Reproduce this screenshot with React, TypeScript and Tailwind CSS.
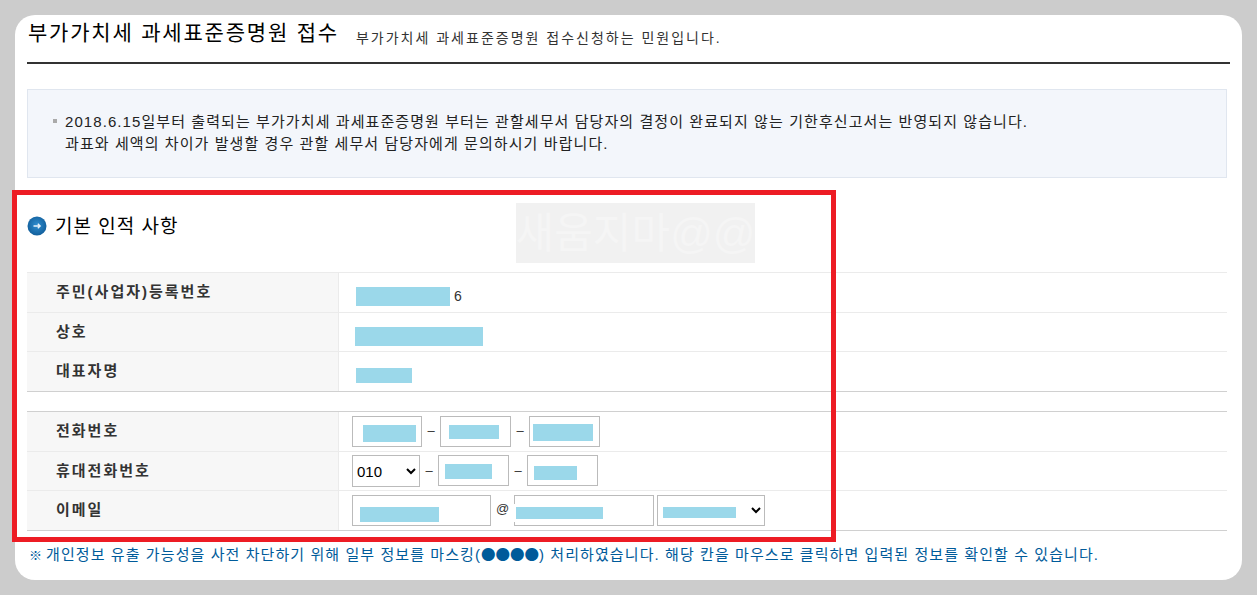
import { FC, ReactNode } from 'react';

const font = '[font-family:"Liberation_Sans","Noto_Sans_CJK_KR",sans-serif]';

const Row: FC<{ label: string; line: string; h: string; children?: ReactNode }> = ({ label, line, h, children }) => {
  return (
    <div className={`flex border-t ${line} ${h}`}>
      <div className="flex w-[312px] items-center border-r border-[#ebebeb] bg-[#f7f7f7] pl-[29px] text-[15px] font-bold tracking-[2px] text-[#333]">
        {label}
      </div>
      <div className="flex flex-1 items-start">{children}</div>
    </div>
  );
};

const Dash = () => <span className="mt-[11px] w-[18px] text-center text-[13px] leading-[16px] text-[#333]">–</span>;

export default function App() {
  return (
    <div className={`relative h-[595px] w-[1257px] overflow-hidden bg-[#cccccc] p-[15px] ${font}`}>
      <div className="h-[565px] w-[1227px] rounded-[20px] bg-white px-[12px]">
        {/* title */}
        <div className="flex h-[49px] items-start border-b-2 border-[#333] pt-[4px]">
          <h1 className="ml-[1px] text-[21px] leading-[28px] tracking-[1.8px] text-black">부가가치세 과세표준증명원 접수</h1>
          <span className="ml-[17px] mt-[9px] text-[14px] leading-[20px] tracking-[2px] text-[#333]">
            부가가치세 과세표준증명원 접수신청하는 민원입니다.
          </span>
        </div>

        {/* notice */}
        <div className="mt-[25px] flex h-[89px] w-[1200px] border border-[#e0e6ef] bg-[#f3f6fb] pl-[25px] pt-[21px] text-[15px] leading-[22px] tracking-[1.08px] text-[#222]">
          <span className="mr-[8px] mt-[8px] h-[4px] w-[4px] bg-[#aaaaaa]" />
          <p>
            2018.6.15일부터 출력되는 부가가치세 과세표준증명원 부터는 관할세무서 담당자의 결정이 완료되지 않는 기한후신고서는 반영되지 않습니다.
            <br />
            과표와 세액의 차이가 발생할 경우 관할 세무서 담당자에게 문의하시기 바랍니다.
          </p>
        </div>

        {/* section heading */}
        <div className="flex h-[94px] items-start pt-[37px]">
          <svg width="20" height="20" viewBox="0 0 20 20" className="mt-[1px]">
            <defs>
              <radialGradient id="ball" cx="50%" cy="45%" r="55%">
                <stop offset="0%" stopColor="#2f8ed0" />
                <stop offset="100%" stopColor="#125f9c" />
              </radialGradient>
            </defs>
            <circle cx="10" cy="10" r="9.5" fill="url(#ball)" />
            <path d="M6.5 10h6.5M10.8 7.8l2.4 2.2-2.4 2.2" fill="none" stroke="#e8f2fa" strokeWidth="1.3" />
          </svg>
          <h2 className="ml-[8px] mt-[1px] text-[19px] leading-[22px] tracking-[1px] text-black">기본 인적 사항</h2>
        </div>

        {/* company info */}
        <div className="w-[1200px] border-b border-[#d0d0d0]">
          <Row label="주민(사업자)등록번호" line="border-[#ebebeb]" h="h-[40px]">
            <div className="ml-[17px] mt-[14px] h-[19px] w-[94px] bg-[#9bd8ea]" />
            <span className="ml-[4px] mt-[14px] text-[14px] leading-[19px] text-[#333]">6</span>
          </Row>
          <Row label="상호" line="border-[#ebebeb]" h="h-[39px]">
            <div className="ml-[16px] mt-[14px] h-[19px] w-[128px] bg-[#9bd8ea]" />
          </Row>
          <Row label="대표자명" line="border-[#ebebeb]" h="h-[40px]">
            <div className="ml-[17px] mt-[16px] h-[15px] w-[56px] bg-[#9bd8ea]" />
          </Row>
        </div>

        {/* contact info */}
        <div className="mt-[19px] w-[1200px] border-b border-[#d0d0d0]">
          <Row label="전화번호" line="border-[#d0d0d0]" h="h-[40px]">
            <div className="ml-[13px] mt-[4px] h-[31px] w-[70px] border border-[#bbbbbb]">
              <div className="ml-[10px] mt-[8px] h-[17px] w-[53px] bg-[#9bd8ea]" />
            </div>
            <Dash />
            <div className="mt-[4px] h-[31px] w-[71px] border border-[#bbbbbb]">
              <div className="ml-[8px] mt-[8px] h-[14px] w-[50px] bg-[#9bd8ea]" />
            </div>
            <Dash />
            <div className="mt-[4px] h-[31px] w-[71px] border border-[#bbbbbb]">
              <div className="ml-[3px] mt-[7px] h-[17px] w-[60px] bg-[#9bd8ea]" />
            </div>
          </Row>
          <Row label="휴대전화번호" line="border-[#ebebeb]" h="h-[39px]">
            <select className="ml-[13px] mt-[3px] h-[32px] w-[68px] border border-[#bbbbbb] text-[15px] text-black [font-family:'Liberation_Sans',sans-serif]">
              <option>010</option>
            </select>
            <Dash />
            <div className="mt-[3px] h-[31px] w-[71px] border border-[#bbbbbb]">
              <div className="ml-[6px] mt-[8px] h-[15px] w-[47px] bg-[#9bd8ea]" />
            </div>
            <Dash />
            <div className="mt-[3px] h-[31px] w-[71px] border border-[#bbbbbb]">
              <div className="ml-[6px] mt-[10px] h-[14px] w-[43px] bg-[#9bd8ea]" />
            </div>
          </Row>
          <Row label="이메일" line="border-[#ebebeb]" h="h-[40px]">
            <div className="ml-[13px] mt-[4px] h-[31px] w-[139px] border border-[#bbbbbb]">
              <div className="ml-[7px] mt-[11px] h-[15px] w-[79px] bg-[#9bd8ea]" />
            </div>
            <span className="ml-[5px] mt-[10px] w-[18px] text-[13px] leading-[16px] text-[#333]">@</span>
            <div className="relative mt-[4px] h-[31px] w-[140px] border border-[#bbbbbb]">
              <div className="ml-[1px] mt-[11px] h-[12px] w-[87px] bg-[#9bd8ea]" />
              <div className="absolute -left-[1px] top-[8px] h-[18px] w-[1px] bg-white" />
            </div>
            <div className="relative ml-[3px] mt-[4px]">
              <select className="block h-[31px] w-[108px] border border-[#bbbbbb] text-[14px]">
                <option></option>
              </select>
              <div className="absolute left-[6px] top-[12px] h-[11px] w-[73px] bg-[#9bd8ea]" />
            </div>
          </Row>
        </div>

        <p className="ml-[2px] mt-[13px] text-[15px] leading-[20px] tracking-[1.08px] text-[#005b9a]">
          <span className="mr-[3px] text-[13px]">※</span>개인정보 유출 가능성을 사전 차단하기 위해 일부 정보를 마스킹(
          <span className="[font-family:'Noto_Sans_CJK_KR',sans-serif] text-[14.5px] tracking-[0px]">●●●●</span>) 처리하였습니다. 해당 칸을 마우스로 클릭하면 입력된 정보를 확인할 수 있습니다.
        </p>
      </div>

      {/* watermark and annotation drawn on top of the page */}
      <div className="absolute left-[516px] top-[203px] flex h-[60px] w-[239px] items-center justify-center overflow-hidden whitespace-nowrap bg-[#f1f1f1] text-[42px] text-[#f5f5f5]">
        새움지마@@
      </div>
      <div className="pointer-events-none absolute left-[12px] top-[190px] h-[352px] w-[824px] border-[5px] border-[#ed1c24]" />
    </div>
  );
}
